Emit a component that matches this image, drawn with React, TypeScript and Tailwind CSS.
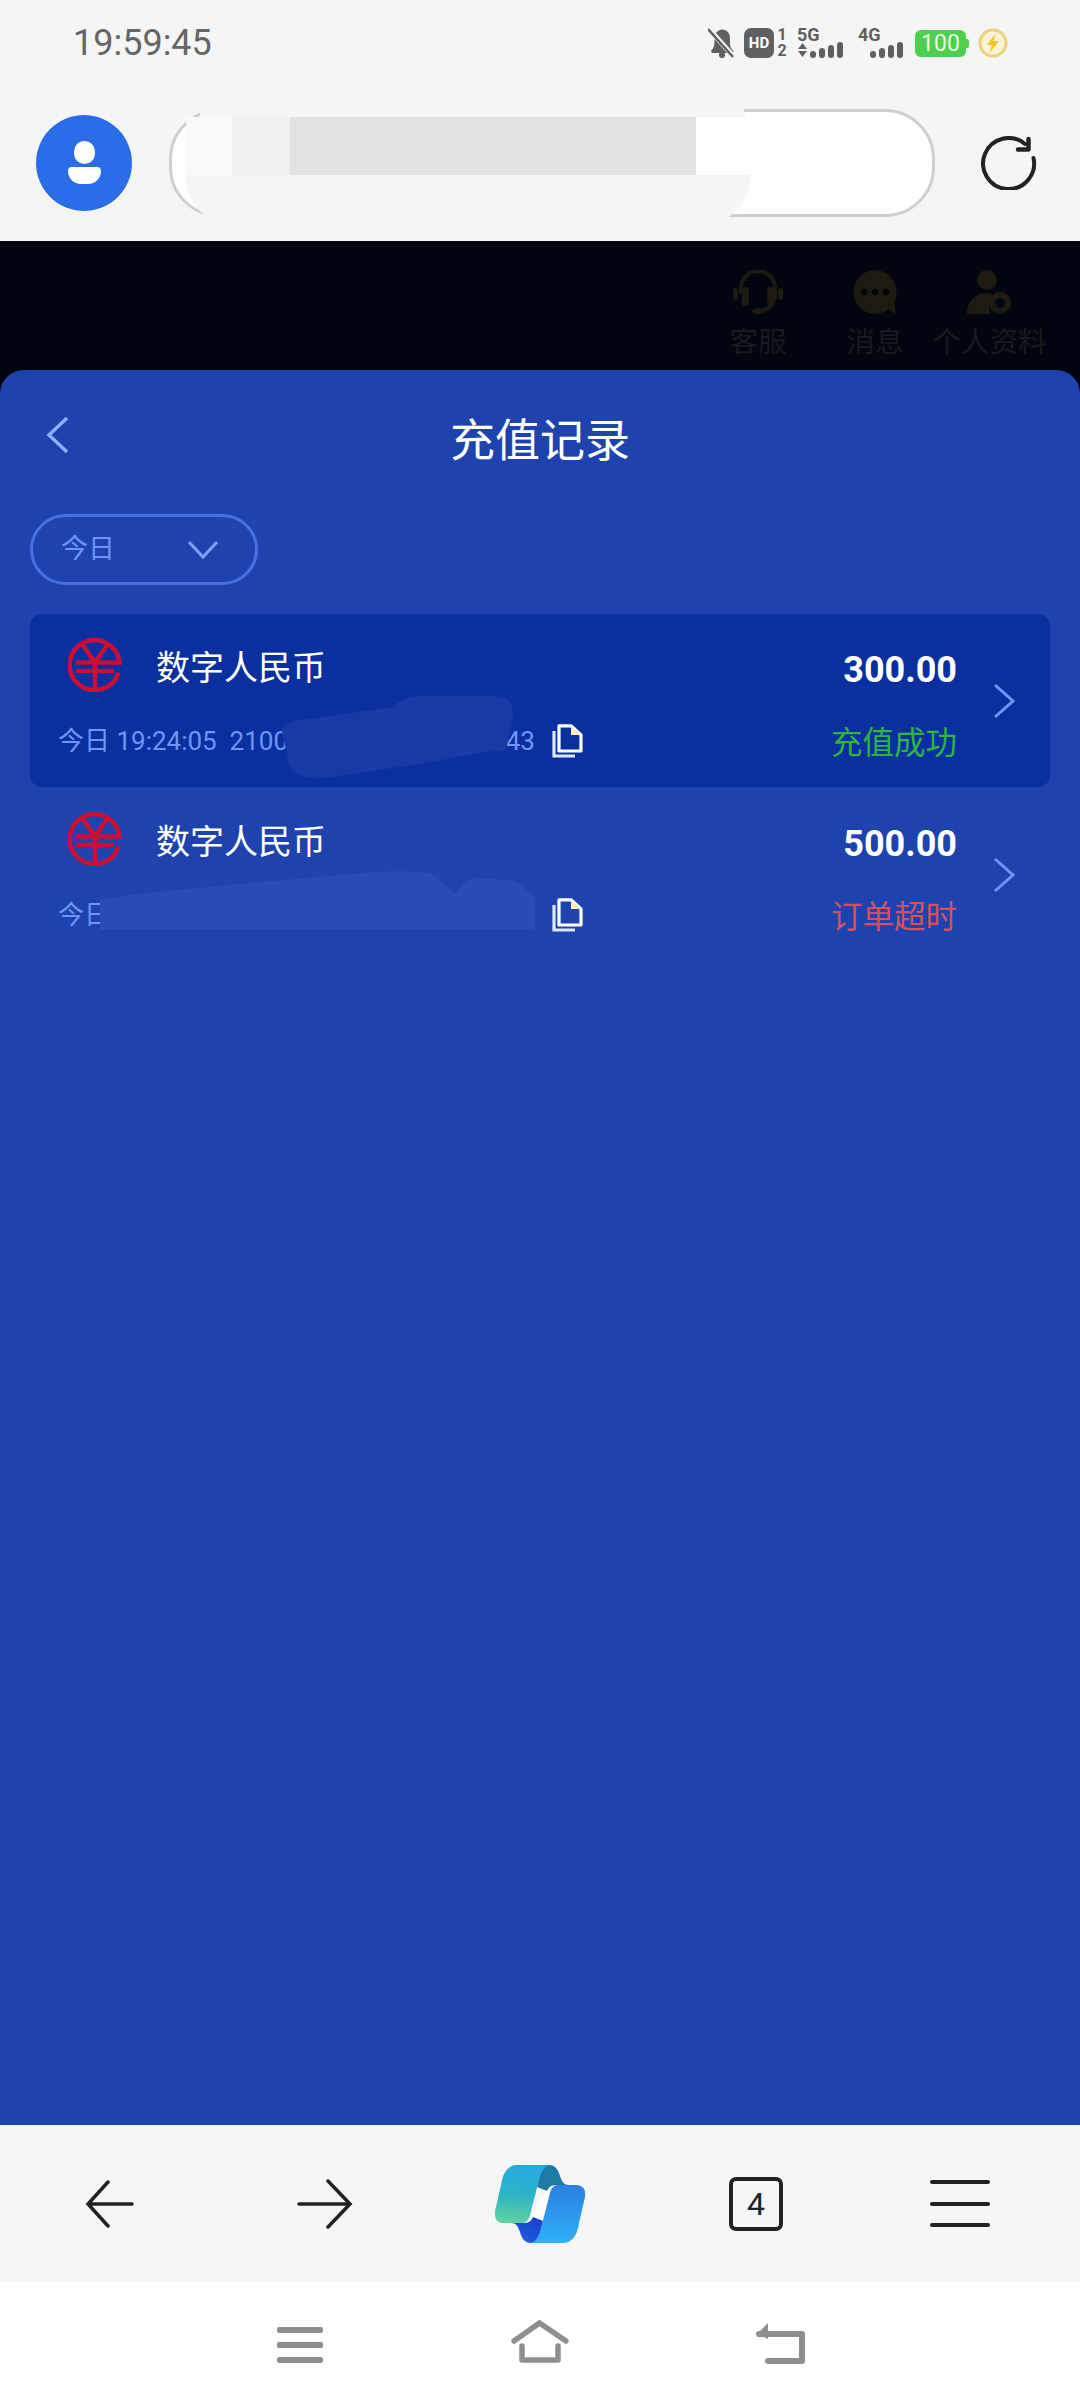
import React from "react";

const FONT = { fontFamily: '"Roboto","Noto Sans CJK SC",sans-serif' };

function Bars({ x, arrows }: { x: number; arrows?: boolean }) {
  return (
    <svg width="48" height="16" viewBox="0 0 48 16" className="block">
      {arrows && <path d="M1 7 L5.5 1 L10 7Z M1 9 L10 9 L5.5 15Z" fill="#606060" />}
      <g fill="#606060">
        <rect x={x} y={9} width={6} height={7} rx={3} />
        <rect x={x + 9} y={6} width={6} height={10} rx={3} />
        <rect x={x + 18} y={3} width={6} height={13} rx={3} />
        <rect x={x + 27} y={0} width={6} height={16} rx={3} />
      </g>
    </svg>
  );
}

function Net({ label, x, arrows }: { label: string; x: number; arrows?: boolean }) {
  return (
    <div className="flex h-[30px] w-[48px] flex-col justify-between">
      <span className="text-[18px] font-bold leading-[14px] text-[#606060]">{label}</span>
      <Bars x={x} arrows={arrows} />
    </div>
  );
}

function StatusIcons() {
  return (
    <div className="flex items-center">
      <svg width="28" height="30" viewBox="0 0 28 30" className="block">
        <path d="M3 23 C6 20 6.5 17 6.5 12 C6.5 5 10 1.5 14 1.5 C19 1.5 22 5 22 11 L22 16 C22 19 23.5 21 25.5 23 L25 25 L4 25Z" fill="#606060" />
        <circle cx="14" cy="27" r="3" fill="#606060" />
        <path d="M1 1 L26 29" stroke="#f5f5f5" strokeWidth="5" />
        <path d="M0 1 L25 29" stroke="#606060" strokeWidth="2.5" />
      </svg>
      <div className="ml-[8px] flex h-[30px] w-[30px] items-center justify-center rounded-[7px] bg-[#606060] text-[15px] font-bold leading-none text-white">HD</div>
      <div className="ml-[3px] flex h-[30px] w-[10px] flex-col items-center justify-between text-[16px] font-bold leading-[14px] text-[#606060]">
        <span>1</span>
        <span>2</span>
      </div>
      <div className="ml-[10px]"><Net label="5G" x={13} arrows /></div>
      <div className="ml-[13px]"><Net label="4G" x={12} /></div>
      <div className="relative ml-[9px] flex h-[27px] w-[51px] items-center justify-center rounded-[6px] bg-[#4dd04f] text-[23px] leading-none text-[#eafbe5]">
        100
        <span className="absolute right-[-3px] top-[9px] h-[9px] w-[3px] rounded-r-[2px] bg-[#4dd04f]" />
      </div>
      <svg width="30" height="30" viewBox="0 0 30 30" className="ml-[12px] block">
        <circle cx="15" cy="15" r="13" fill="#fbf3d8" stroke="#ecd27a" strokeWidth="3" />
        <path d="M18 5 L9 17 H14 L11.5 25 L21 13 H15.5Z" fill="#f6c21c" />
      </svg>
    </div>
  );
}

function Rmb() {
  return (
    <svg width="54" height="55" viewBox="0 0 54 54" className="mb-[8px] block shrink-0">
      <g fill="none" stroke="#c80f36" strokeWidth="4.6">
        <path d="M50.5 35 A25 25 0 1 1 51.5 25 H8" />
        <path d="M8 33.5 H46" />
        <path d="M13 5 L27 25 L41 5" />
        <path d="M27 25 V51" />
      </g>
    </svg>
  );
}

function Copy() {
  return (
    <svg width="31" height="34" viewBox="0 0 31 34" className="block">
      <path d="M2 7 V32 H23" fill="none" stroke="#dfe6fb" strokeWidth="3.2" />
      <path d="M7 1.8 H19 L29 11 V27 H7Z" fill="none" stroke="#ffffff" strokeWidth="3.2" strokeLinejoin="round" />
      <path d="M19 2 V11 H29Z" fill="#fdeebc" />
    </svg>
  );
}

function Row({
  active,
  amount,
  status,
  statusColor,
  date,
  tail,
  blob,
}: {
  active?: boolean;
  amount: string;
  status: string;
  statusColor: string;
  date: string;
  tail?: string;
  blob: React.ReactNode;
}) {
  return (
    <div className={`relative flex h-[173px] items-center rounded-[12px] pl-[28px] pr-[34px] ${active ? "bg-[#0a2f9e]" : ""}`}>
      <div className="flex h-full min-w-0 flex-1 flex-col">
        <div className="flex h-[108px] items-center pl-[10px]">
          <Rmb />
          <span className="ml-[34px] text-[34px] leading-none text-white">数字人民币</span>
        </div>
        <div className="flex items-center pt-[1px]">
          <div className="flex w-[494px] justify-between pr-[17px] text-[26px] leading-[36px] text-[#6f96f4]">
            <span className="whitespace-pre">{date}</span>
            {tail && <span>{tail}</span>}
          </div>
          <Copy />
        </div>
      </div>
      <div className="flex h-full flex-col items-end">
        <div className="flex h-[108px] items-center pt-[4px] text-[36px] font-bold leading-none text-white">{amount}</div>
        <div className="mt-[2px] text-[31.5px] leading-[40px]" style={{ color: statusColor }}>{status}</div>
      </div>
      <svg width="24" height="36" viewBox="0 0 24 36" className="ml-[35px] block shrink-0">
        <path d="M3 2 L21 18 L3 34" fill="none" stroke="#6f96f4" strokeWidth="3" />
      </svg>
      {blob}
    </div>
  );
}

export default function App() {
  return (
    <div className="flex h-[2408px] w-[1080px] flex-col overflow-hidden bg-white" style={FONT}>
      <div className="bg-[#f5f5f5]">
        <div className="flex h-[84px] items-center justify-between pl-[73px] pr-[72px] pt-[2px]">
          <span className="text-[36px] leading-none text-[#666666]">19:59:45</span>
          <StatusIcons />
        </div>
        <div className="flex h-[157px] items-center pl-[36px]">
          <div className="flex h-[96px] w-[96px] shrink-0 flex-col items-center justify-center rounded-full bg-[#2b6de8]">
            <span className="h-[23px] w-[21px] rounded-full bg-white" />
            <span className="mt-[3px] h-[17px] w-[33px] rounded-b-[16px] rounded-t-[5px] bg-white" />
          </div>
          <div className="relative ml-[37px] h-[108px] w-[766px] shrink-0 rounded-[50px] border-[3px] border-[#cfcfcf] bg-white">
            <div className="absolute left-[28px] top-[-27px] h-[32px] w-[545px] rounded-t-[50px] bg-[#f5f5f5]" />
            <div className="absolute left-[14px] top-[5px] flex h-[58px] w-[510px]">
              <span className="w-[46px] bg-[#f9f9f9]" />
              <span className="w-[58px] bg-[#f0f0f0]" />
              <span className="flex-1 bg-[#e2e2e2]" />
            </div>
            <div className="absolute left-[14px] top-[63px] h-[51px] w-[564px] rounded-b-[50px] bg-[#f5f5f5]" />
          </div>
          <svg width="56" height="54" viewBox="0 0 56 54" className="ml-[46px] block shrink-0">
            <path d="M52.5 22 A25.5 25.5 0 1 1 44 8" fill="none" stroke="#222" strokeWidth="4" strokeLinecap="round" />
            <path d="M47.5 3 V13.5 H37" fill="none" stroke="#222" strokeWidth="4.5" strokeLinecap="round" strokeLinejoin="round" />
          </svg>
        </div>
      </div>

      <div className="bg-[#02050f]">
        <div className="flex h-[129px] items-start justify-end pr-[33px] pt-[29px] text-[28.5px] leading-[28px] text-[#171a1e]">
          <div className="flex w-[58px] flex-col items-center">
            <svg width="50" height="46" viewBox="0 0 50 46" className="block">
              <path d="M8 24 V18 A17 17 0 0 1 42 18 V24 C42 34 36 40 26 41" fill="none" stroke="#1d1a12" strokeWidth="4" />
              <rect x="0" y="18" width="5" height="12" rx="2.5" fill="#1d1a12" />
              <rect x="45" y="18" width="5" height="12" rx="2.5" fill="#1d1a12" />
              <rect x="9" y="17" width="7" height="19" rx="3" fill="#1d1a12" />
              <rect x="34" y="17" width="7" height="19" rx="3" fill="#1d1a12" />
              <ellipse cx="25" cy="41" rx="6" ry="3" fill="#1d1a12" />
            </svg>
            <span className="mt-[13px] whitespace-nowrap">客服</span>
          </div>
          <div className="ml-[60px] flex w-[56px] flex-col items-center">
            <svg width="44" height="46" viewBox="0 0 44 46" className="block">
              <ellipse cx="22" cy="22" rx="21.5" ry="22" fill="#1d1a12" />
              <path d="M34 38 L43 44 L41 28Z" fill="#1d1a12" />
              <circle cx="11" cy="22" r="3.2" fill="#02050f" />
              <circle cx="22" cy="22" r="3.2" fill="#02050f" />
              <circle cx="33" cy="22" r="3.2" fill="#02050f" />
            </svg>
            <span className="mt-[13px] whitespace-nowrap">消息</span>
          </div>
          <div className="ml-[29px] flex w-[115px] flex-col items-center">
            <svg width="46" height="46" viewBox="0 0 46 46" className="block">
              <circle cx="20" cy="10" r="10" fill="#1d1a12" />
              <path d="M0 44 C0 30 9 23 21 23 C26 23 26 26 24 30 C21 36 22 40 24 44Z" fill="#1d1a12" />
              <circle cx="33" cy="33" r="8" fill="none" stroke="#1d1a12" strokeWidth="6" />
            </svg>
            <span className="mt-[13px] whitespace-nowrap">个人资料</span>
          </div>
        </div>

        <div className="flex h-[1755px] flex-col rounded-t-[24px] bg-[#1e43af] px-[30px]">
          <div className="relative flex h-[138px] shrink-0 items-center justify-center pt-[4px]">
            <svg width="24" height="38" viewBox="0 0 24 38" className="absolute left-[16px] top-[46px] block">
              <path d="M21 2 L3 19 L21 36" fill="none" stroke="#8fb0f8" strokeWidth="3.4" />
            </svg>
            <span className="text-[45px] leading-none text-white">充值记录</span>
          </div>
          <div className="mt-[6px] flex h-[71px] w-[228px] shrink-0 items-center justify-between rounded-full border-[3px] border-[#4a6fe0] pl-[28px] pr-[36px]">
            <span className="text-[27px] leading-none text-[#6f96f4]">今日</span>
            <svg width="32" height="20" viewBox="0 0 32 20" className="block">
              <path d="M2 2 L16 17 L30 2" fill="none" stroke="#7ea0f6" strokeWidth="3" />
            </svg>
          </div>
          <div className="mt-[29px] flex flex-col gap-px">
            <Row
              active
              amount="300.00"
              status="充值成功"
              statusColor="#2fb344"
              date="今日 19:24:05  2100"
              tail=".43"
              blob={
                <svg width="240" height="90" viewBox="0 0 240 90" className="absolute left-[250px] top-[80px] block">
                  <path d="M2 37 C2 30 14 26 23 26 L112 13 C122 4 134 2 147 2 H216 C230 2 234 14 233 24 L226 56 C180 60 150 70 133 71 L44 84 C20 86 10 76 9 70Z" fill="#193aa6" />
                </svg>
              }
            />
            <Row
              amount="500.00"
              status="订单超时"
              statusColor="#d5505f"
              date="今日"
              blob={
                <svg width="437" height="60" viewBox="0 0 437 60" className="absolute left-[70px] top-[82px] block">
                  <path d="M0 30 L2 30 L36 24 L173 11 L277 2 C300 0 325 2 332 4 C345 14 350 20 356 24 C362 12 372 6 380 8 L415 11 C425 18 433 24 435 30 V60 H0Z" fill="#2a4bb5" />
                </svg>
              }
            />
          </div>
        </div>
      </div>

      <div className="flex h-[157px] items-center bg-[#f5f6f7]">
        <div className="flex w-full items-center">
          <svg width="50" height="48" viewBox="0 0 50 48" className="ml-[85px] block">
            <path d="M23 2 L3 24 L23 46 M3 24 H47" fill="none" stroke="#222" strokeWidth="3.5" strokeLinecap="round" />
          </svg>
          <svg width="56" height="50" viewBox="0 0 56 50" className="ml-[162px] block">
            <path d="M31 2 L53 25 L31 48 M2 25 H53" fill="none" stroke="#222" strokeWidth="3.5" strokeLinecap="round" />
          </svg>
          <svg width="90" height="78" viewBox="0 0 90 78" className="ml-[142px] block">
            <defs>
              <linearGradient id="l" x1="0.4" y1="0" x2="0.3" y2="1">
                <stop offset="0" stopColor="#27a9e0" />
                <stop offset="0.5" stopColor="#2eb3c8" />
                <stop offset="1" stopColor="#5fd49c" />
              </linearGradient>
              <linearGradient id="r" x1="0.6" y1="0" x2="0.6" y2="1">
                <stop offset="0" stopColor="#2c80e0" />
                <stop offset="1" stopColor="#2fb0fb" />
              </linearGradient>
              <linearGradient id="b" x1="0.8" y1="0" x2="0.2" y2="1">
                <stop offset="0" stopColor="#1a3fc8" />
                <stop offset="1" stopColor="#1f5fe8" />
              </linearGradient>
            </defs>
            <path d="M54 20 H62 L46 58 H32Z" fill="#ffffff" />
            <path d="M46 4 C48 1 50 0 54 0 C60 0 63 4 65 11 C67 17 69 20 74 20 H62 C56 20 54 22 52 26 L42 22Z" fill="#1e79a8" />
            <path d="M44 74 C42 77 40 78 36 78 C30 78 27 74 25 67 C23 61 21 58 16 58 H28 C34 58 36 56 38 52 L48 56Z" fill="url(#b)" />
            <path d="M22 0 H54 C48 2 46 8 44 15 L35 50 C34 55 31 58 27 58 H10 C2 58 -1 54 0 46 L6 20 C8 6 14 0 22 0Z" fill="url(#l)" />
            <path d="M68 78 H36 C42 76 44 70 46 63 L55 28 C56 23 59 20 63 20 H80 C88 20 91 24 90 32 L84 58 C82 72 76 78 68 78Z" fill="url(#r)" />
          </svg>
          <div className="ml-[144px] flex h-[54px] w-[54px] items-center justify-center rounded-[7px] border-[4px] border-[#222] text-[32px] leading-none text-[#222]">4</div>
          <div className="ml-[147px] flex h-[47px] w-[60px] flex-col justify-between">
            <span className="h-[4px] w-full rounded-full bg-[#222]" />
            <span className="h-[4px] w-full rounded-full bg-[#222]" />
            <span className="h-[4px] w-full rounded-full bg-[#222]" />
          </div>
        </div>
      </div>

      <div className="flex h-[126px] items-start bg-white">
        <div className="ml-[277px] mt-[45px] flex h-[36px] w-[46px] flex-col justify-between">
          <span className="h-[6px] w-full rounded-[2px] bg-[#8f8f8f]" />
          <span className="h-[6px] w-full rounded-[2px] bg-[#8f8f8f]" />
          <span className="h-[6px] w-full rounded-[2px] bg-[#8f8f8f]" />
        </div>
        <svg width="58" height="44" viewBox="0 0 58 44" className="ml-[188px] mt-[38px] block">
          <path d="M3 21 L28.5 3 L55 21" fill="none" stroke="#8f8f8f" strokeWidth="5.5" strokeLinecap="round" />
          <path d="M11 26 V40 H47 V26" fill="none" stroke="#8f8f8f" strokeWidth="5.5" strokeLinecap="round" strokeLinejoin="round" />
        </svg>
        <svg width="50" height="44" viewBox="0 0 50 44" className="ml-[187px] mt-[40px] block">
          <path d="M3 12 H46 V39 H12" fill="none" stroke="#8f8f8f" strokeWidth="6" strokeLinecap="round" strokeLinejoin="round" />
          <path d="M12 1 L1 12 L12 17Z" fill="#8f8f8f" />
        </svg>
      </div>
    </div>
  );
}
